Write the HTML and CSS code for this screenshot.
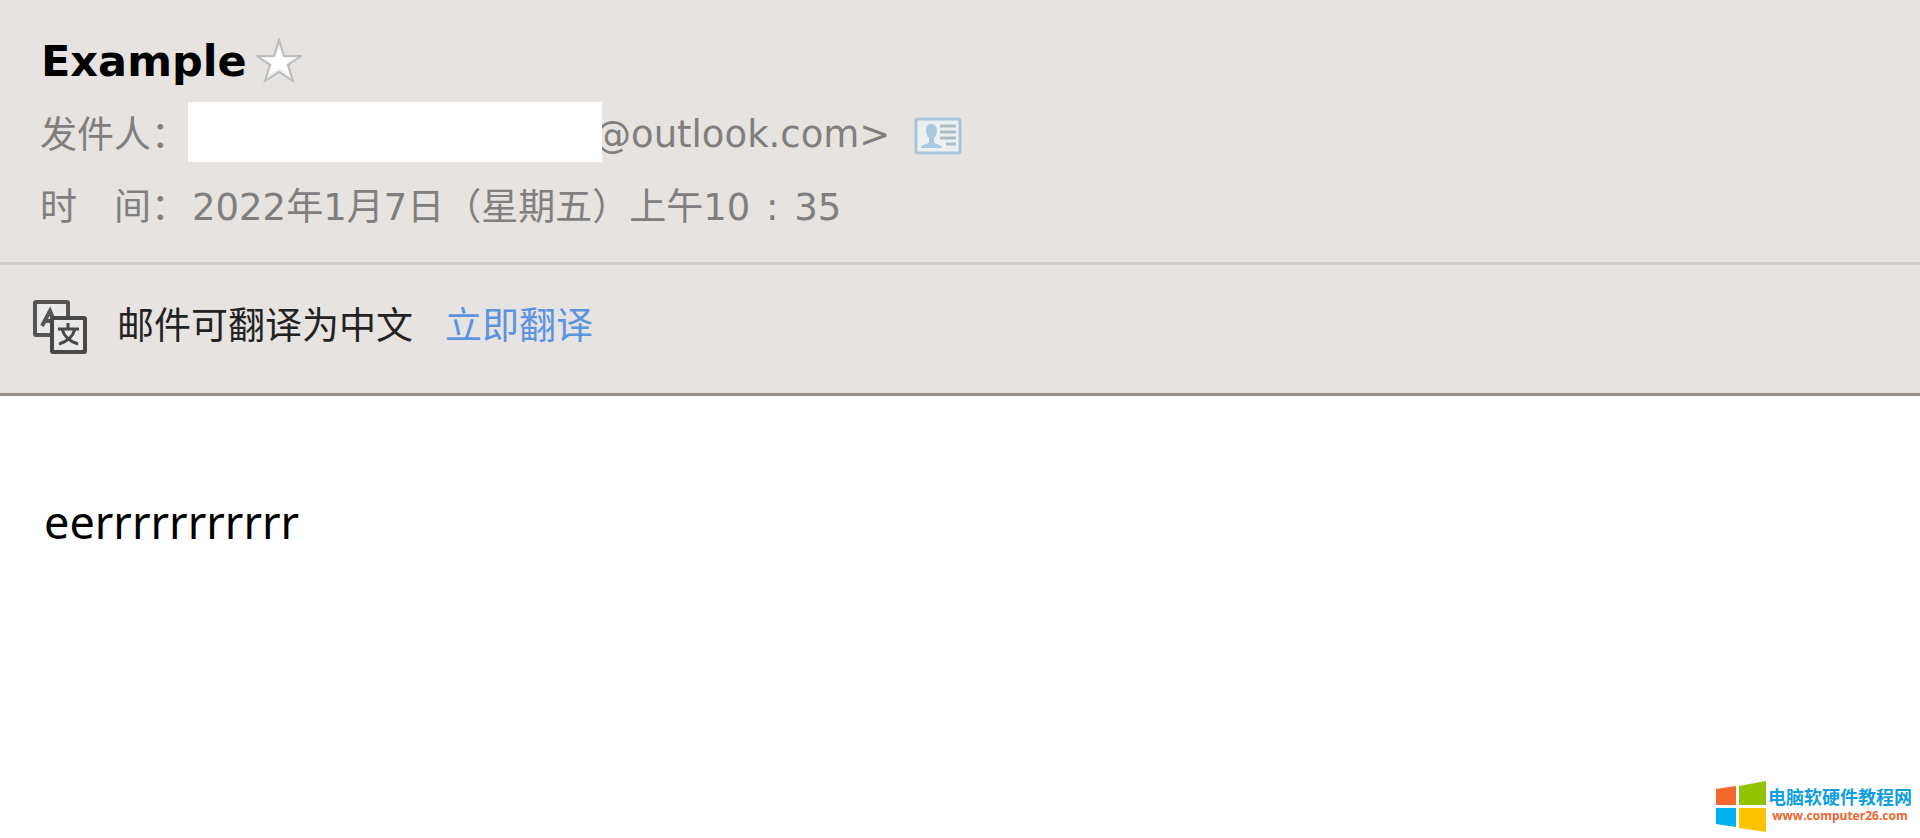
FILE: index.html
```html
<!DOCTYPE html>
<html lang="zh-CN">
<head>
    <meta charset="UTF-8">
    <meta name="viewport" content="width=device-width, initial-scale=1.0">
    <title>Example</title>
    <link rel="stylesheet" href="styles.css">
</head>
<body>
    <header class="mail-header">
        <div class="subject-row">
            <h1>Example</h1>
            <button class="icon-button" type="button" aria-label="星标">
                <svg width="46" height="46" viewBox="0 0 46 46">
                    <path d="M23 2 L28 18 H45 L32 27 L37 43 L23 34 L9 43 L14 27 L1 18 H18 Z" fill="#f3f3f2" fill-opacity=".8" stroke="#b9bbbd" stroke-width="2"/>
                    <path d="M23 10 L27 20 H37 L30 26 L33 36 L23 30 L13 36 L16 26 L9 20 H19 Z" fill="#fff"/>
                </svg>
            </button>
        </div>
        <div class="info-row">
            <span class="label">发件人：</span>
            <span class="sender-name"></span>
            <span class="sender-address">@outlook.com&gt;</span>
            <button class="icon-button contact" type="button" aria-label="联系人">
                <svg width="48" height="38" viewBox="0 0 48 38">
                    <rect x="2" y="2" width="44" height="34" rx="2" fill="#edf0f1" stroke="#a9c4d9" stroke-width="3"/>
                    <path d="M17 7c-4 0-5 3-5 6 0 4 1 6 3 8v4c-2 3-8 2-8 6h21c0-4-6-3-8-6v-4c2-2 3-4 3-8 0-3-2-6-6-6z" fill="#a9c9e2"/>
                    <path d="M26 9h16M26 15h16M26 21h16M32 27h10" stroke="#aebbc5" stroke-width="3"/>
                </svg>
            </button>
        </div>
        <div class="info-row">
            <span class="label">时　间：</span>
            <span>2022年1月7日（星期五）上午10<span class="colon">:</span>35</span>
        </div>
    </header>

    <div class="translate-bar">
        <svg width="54" height="54" viewBox="0 0 54 54">
            <rect x="2" y="2" width="33" height="33" rx="1" fill="#ebe9e7" stroke="#555" stroke-width="4"/>
            <path d="M9 26l8-15 6 15M11 21h10" fill="none" stroke="#555" stroke-width="4"/>
            <rect x="19" y="18" width="33" height="34" rx="1" fill="#ebe9e7" stroke="#484848" stroke-width="4"/>
            <path d="M35 23v5M25 29h21M29 29c2 7 8 13 16 15M42 29c-2 7-8 13-16 15" fill="none" stroke="#484848" stroke-width="3"/>
        </svg>
        <span>邮件可翻译为中文</span>
        <a href="#">立即翻译</a>
    </div>

    <main class="mail-body">
        <p>eerrrrrrrrrrr</p>
    </main>

    <div class="site-mark">
        <svg width="50" height="52" viewBox="0 0 50 52">
            <path d="M0 8l20-3v19H0z" fill="#f5682e"/>
            <path d="M23 5l27-5v24H23z" fill="#91c300"/>
            <path d="M0 27h20v19L0 43z" fill="#00b1f0"/>
            <path d="M23 27h27v24l-27-4z" fill="#fdc300"/>
        </svg>
        <div class="site-text">
            <div class="site-name">电脑软硬件教程网</div>
            <div class="site-url">www.computer26.com</div>
        </div>
    </div>
</body>
</html>
```

FILE: styles.css
```css
* {
    box-sizing: border-box;
}

body {
    margin: 0;
    min-height: 100vh;
    position: relative;
    background-color: #fff;
    font-family: "DejaVu Sans", "Noto Sans CJK SC", sans-serif;
    font-size: 37px;
}

.mail-header {
    padding: 26px 40px 22px;
    background-color: #e6e3e0;
    border-bottom: 3px solid #d0ccc8;
    color: #807e7e;
}

.subject-row,
.info-row {
    display: flex;
    align-items: center;
    white-space: nowrap;
}

.subject-row {
    height: 70px;
    gap: 9px;
}

.info-row {
    height: 72px;
}

h1 {
    margin: 0;
    padding-left: 1px;
    font-size: 43px;
    line-height: 72px;
    color: #000;
}

.icon-button {
    display: flex;
    padding: 0;
    border: none;
    background: none;
    cursor: pointer;
}

.label {
    flex: none;
    width: 152px;
}

.colon {
    display: inline-block;
    width: 44px;
    text-align: center;
}

.sender-name {
    width: 414px;
    height: 60px;
    margin-left: -4px;
    background-color: #fff;
    z-index: 1;
}

.sender-address {
    margin-left: -8px;
    padding-top: 4px;
}

.contact {
    margin-left: 24px;
    padding-top: 8px;
}

.translate-bar {
    display: flex;
    align-items: center;
    height: 131px;
    padding: 0 33px 4px;
    background-color: #e6e3e0;
    border-bottom: 3px solid #9c8e8c;
    color: #222;
    line-height: 50px;
}

.translate-bar span {
    margin: 0 32px 0 30px;
}

.translate-bar a {
    color: #5a93e0;
    text-decoration: none;
}

.mail-body {
    padding: 90px 44px;
    font-family: "Noto Sans", sans-serif;
    font-size: 45px;
    line-height: 72px;
    color: #000;
}

.mail-body p {
    margin: 0;
}

.site-mark {
    position: absolute;
    right: 8px;
    bottom: 5px;
    display: flex;
    align-items: center;
    gap: 2px;
}

.site-text {
    text-align: center;
}

.site-name {
    font-family: "Noto Sans CJK SC", sans-serif;
    font-size: 18px;
    font-weight: bold;
    line-height: 18px;
    color: #0d9fe0;
}

.site-url {
    font-family: "Open Sans", sans-serif;
    font-size: 12px;
    font-weight: bold;
    line-height: 22px;
    color: #f0642f;
}
```
